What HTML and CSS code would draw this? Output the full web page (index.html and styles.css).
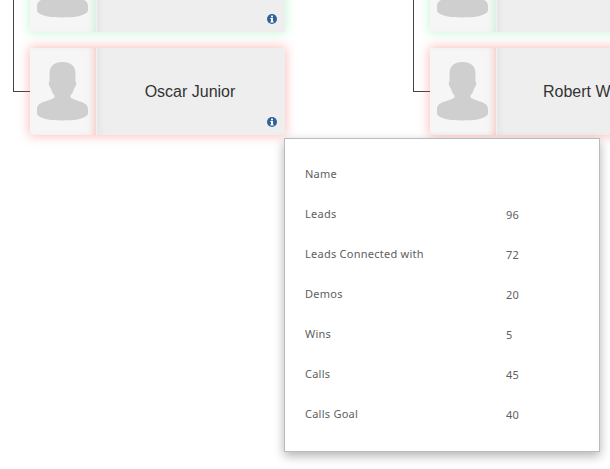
FILE: index.html
```html
<!DOCTYPE html>
<html lang="en">
<head>
<meta charset="utf-8">
<title>Org chart</title>
<link rel="stylesheet" href="styles.css">
</head>
<body>
<svg width="0" height="0" class="defs">
  <symbol id="person" viewBox="0 0 51 59">
    <path d="M25.5 0C34 0 38.5 4 38.5 12L38.5 19.5C39.6 20 39.4 22 38.8 23.5C38.2 25 37.6 26 37 26.5C36.4 29.5 35 32 33.5 33.5L33.5 35.5C35 37 39 38.2 43 39.5C48 41 51 43 51 47L51 51C51 54 47 56 40 57.5C33 58.7 18 58.7 11 57.5C4 56 0 54 0 51L0 47C0 43 3 41 8 39.5C12 38.2 16 37 17.5 35.5L17.5 33.5C16 32 14.600 29.5 14 26.500C13.400 26 12.800 25 12.200 23.500C11.600 22 11.400 20 12.500 19.500L12.500 12C12.500 4 17 0 25.500 0Z" fill="#cfcfcf"/>
  </symbol>
  <symbol id="info" viewBox="0 0 10 10">
    <circle cx="5" cy="5" r="5" fill="#2f6299"/>
    <rect x="4" y="1.600" width="2" height="1.700" fill="#fff"/>
    <path d="M3.300 4.100H6V7.500H6.800V8.500H3.300V7.500H4V5.100H3.300Z" fill="#fff"/>
  </symbol>
</svg>
<main class="canvas">
  <div class="link link-left"></div>
  <article class="node node-green node-a">
    <div class="avatar"><svg class="person"><use href="#person"/></svg></div>
    <div class="body"><svg class="info"><use href="#info"/></svg></div>
  </article>
  <article class="node node-red node-b">
    <div class="avatar"><svg class="person"><use href="#person"/></svg></div>
    <div class="body"><span class="name">Oscar Junior</span><svg class="info"><use href="#info"/></svg></div>
  </article>

  <div class="link link-right"></div>
  <article class="node node-green node-c">
    <div class="avatar"><svg class="person"><use href="#person"/></svg></div>
    <div class="body"></div>
  </article>
  <article class="node node-red node-d">
    <div class="avatar"><svg class="person"><use href="#person"/></svg></div>
    <div class="body"><span class="name">Robert Williams</span></div>
  </article>

  <section class="tooltip">
    <div class="row"><span class="label">Name</span><span class="value"></span></div>
    <div class="row"><span class="label">Leads</span><span class="value">96</span></div>
    <div class="row"><span class="label">Leads Connected with</span><span class="value">72</span></div>
    <div class="row"><span class="label">Demos</span><span class="value">20</span></div>
    <div class="row"><span class="label">Wins</span><span class="value">5</span></div>
    <div class="row"><span class="label">Calls</span><span class="value">45</span></div>
    <div class="row"><span class="label">Calls Goal</span><span class="value">40</span></div>
  </section>
</main>
</body>
</html>
```
FILE: styles.css
```css
html, body {
  margin: 0;
  padding: 0;
  background: #fff;
}
.defs {
  position: absolute;
}
.canvas {
  position: relative;
  width: 610px;
  height: 469px;
  overflow: hidden;
  font-family: "Liberation Sans", Arial, sans-serif;
}
.link {
  position: absolute;
  top: -10px;
  width: 18px;
  height: 101px;
  border-left: 1px solid #444;
  border-bottom: 1px solid #444;
}
.link-left { left: 13px; }
.link-right { left: 413px; }
.node {
  position: absolute;
  display: flex;
  width: 255px;
  height: 87px;
  background: #eee;
}
.node-a { left: 30px; top: -55px; }
.node-b { left: 30px; top: 48px; }
.node-c { left: 430px; top: -55px; width: 300px; }
.node-d { left: 430px; top: 48px; width: 300px; }
.node-green { box-shadow: 0 0 10px 1px rgba(100, 230, 150, 0.35); }
.node-red { box-shadow: 0 0 10px 1px rgba(255, 100, 100, 0.42); }
.avatar {
  flex: 0 0 65px;
  height: 87px;
  padding-right: 1px;
  background: #f6f6f6;
  display: flex;
  justify-content: center;
  align-items: center;
}
.node-green .avatar { box-shadow: inset -6px 0 7px -4px rgba(100, 230, 150, 0.28); }
.node-red .avatar { box-shadow: inset -6px 0 7px -4px rgba(255, 100, 100, 0.32); }
.person {
  width: 51px;
  height: 59px;
}
.body {
  position: relative;
  flex: 1;
  display: flex;
  align-items: center;
  justify-content: center;
  padding-right: 2px;
  border-left: 1px solid #f4f0f0;
  box-shadow: inset 8px 0 7px -5px rgba(0, 0, 0, 0.04);
}
.node-d .body {
  justify-content: flex-start;
  padding-left: 46px;
}
.name {
  font-size: 16px;
  color: #333;
}
.info {
  position: absolute;
  right: 8px;
  bottom: 8px;
  width: 10px;
  height: 10px;
}
.tooltip {
  position: absolute;
  left: 284px;
  top: 138px;
  width: 274px;
  padding: 14px 20px 18px;
  background: #fff;
  border: 1px solid #bbb;
  box-shadow: 0 4px 10px rgba(0, 0, 0, 0.3);
  font-family: "Noto Sans", sans-serif;
  font-size: 11px;
  letter-spacing: 0.25px;
  color: #606060;
}
.row {
  display: flex;
  align-items: center;
  height: 40px;
}
.label {
  flex: 0 0 201px;
}
.value {
  padding-top: 2px;
}
```
